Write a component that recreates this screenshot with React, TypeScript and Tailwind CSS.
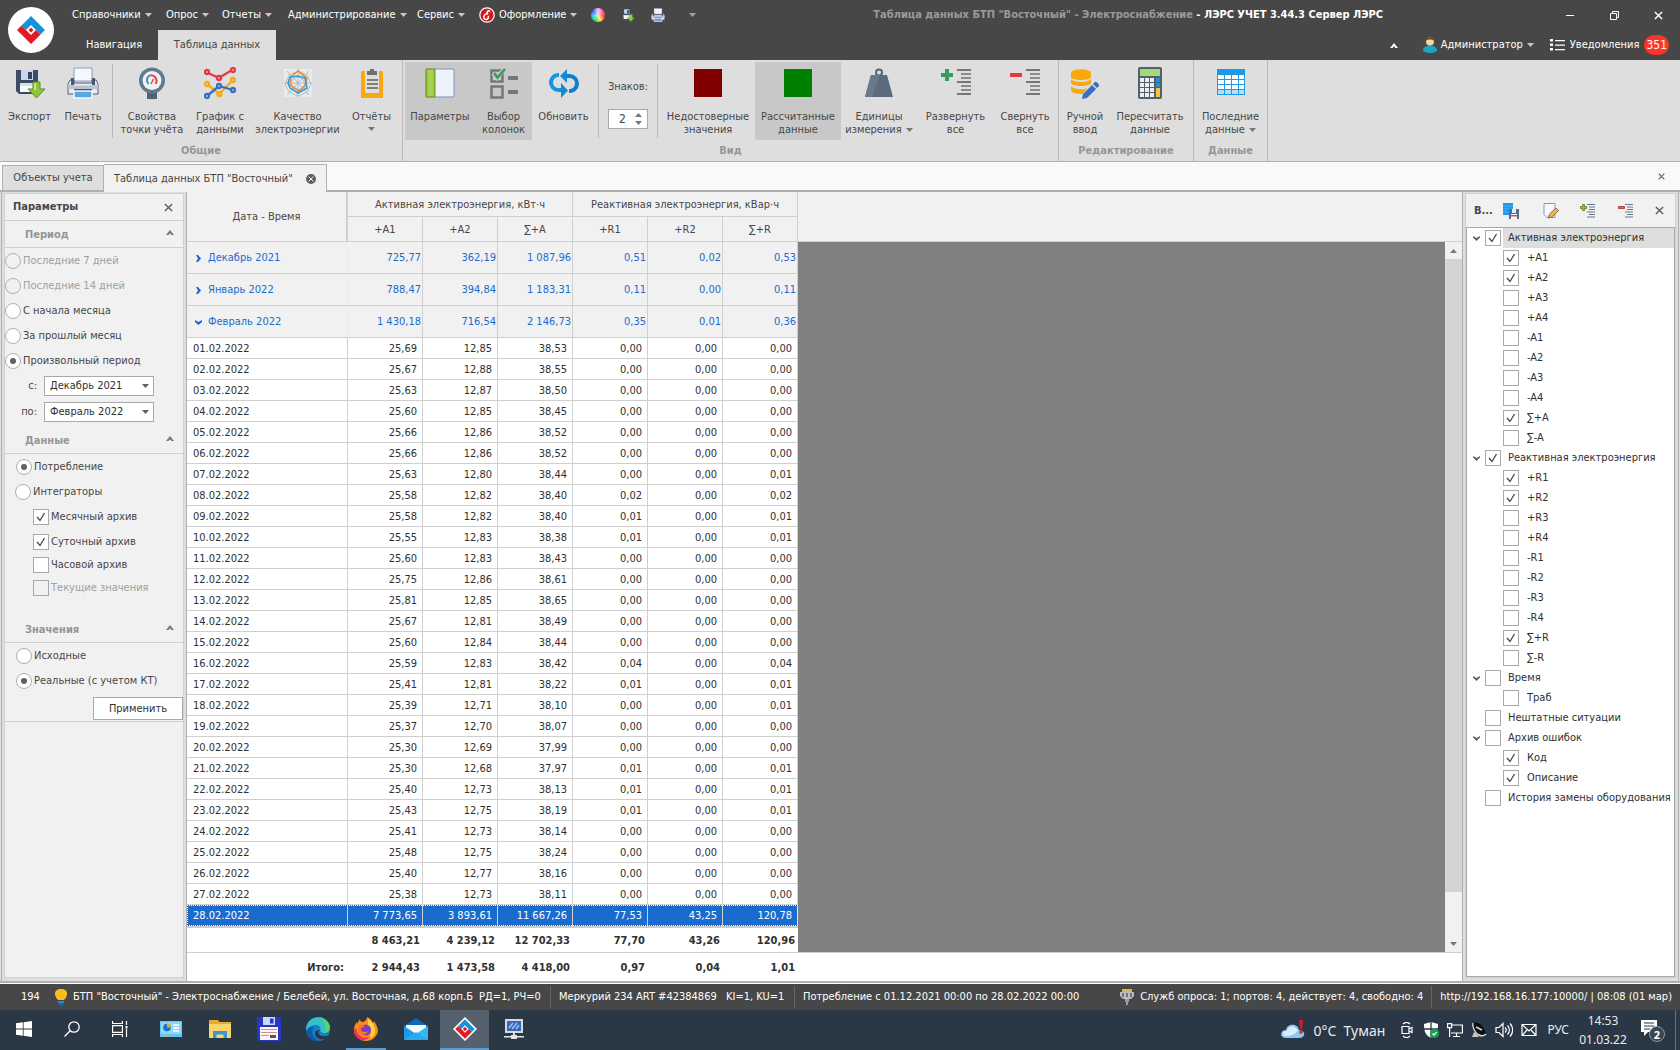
import type { ReactNode } from "react";

const FONT = "font-['DejaVu_Sans_Condensed','Noto_Sans',sans-serif]";

/* ---------- small shared glyphs ---------- */

const Caret = ({ className = "" }: { className?: string }) => (
  <svg viewBox="0 0 7 4" className={`h-1 w-[7px] shrink-0 ${className}`} aria-hidden="true">
    <path d="M0 0h7L3.5 4z" fill="currentColor" />
  </svg>
);

const Cross = ({ className = "size-2.5" }: { className?: string }) => (
  <svg viewBox="0 0 10 10" className={className} aria-hidden="true">
    <path d="M1 1l8 8M9 1l-8 8" stroke="currentColor" strokeWidth="1.6" fill="none" />
  </svg>
);

const ChevronUp = () => (
  <svg viewBox="0 0 8 5" className="h-[5px] w-2" aria-hidden="true">
    <path d="M0 5L4 0l4 5H5.500L4 3.200 2.500 5z" fill="currentColor" />
  </svg>
);

const LersMark = ({ className = "" }: { className?: string }) => (
  <svg viewBox="0 0 28 28" className={className} aria-hidden="true">
    <path d="M14 0l14 14-4.500 4.500L14 9l-5 5-4.500-4.500z" fill="#1492dc" />
    <path d="M14 28L0 14l4.500-4.500L14 19l5-5 4.500 4.500z" fill="#e01b24" />
    <path d="M14 11.500l2.500 2.500-2.500 2.500-2.500-2.500z" fill="#e01b24" />
  </svg>
);

/* ---------- ribbon icons ---------- */

const DiskIcon = ({ className = "size-8" }: { className?: string }) => (
  <svg viewBox="0 0 32 32" className={className} aria-hidden="true">
    <path d="M2 3h22v24H5l-3-3z" fill="#3d4a66" />
    <path d="M7 3h12v10H7z" fill="#c9d6ea" />
    <path d="M14 5h4v7h-4z" fill="#37435e" />
    <path d="M6 16h14v9H6z" fill="#fbfcfe" />
    <path d="M6 16h14v3H6z" fill="#d6deec" />
    <path d="M19 15h7v7h5l-8.500 9L14 22h5z" fill="#8cc63a" stroke="#5d8f1e" />
    <path d="M20 16h2v7h-2z" fill="#c5e68b" />
  </svg>
);

const PrinterIcon = ({ className = "size-8" }: { className?: string }) => (
  <svg viewBox="0 0 32 32" className={className} aria-hidden="true">
    <path d="M7 1h18v13H7z" fill="#f4f7fc" stroke="#8d9bc0" />
    <path d="M3 13h4v3h18v-3h4l2 4v10H1V17z" fill="#e8ebf2" stroke="#4c587a" />
    <path d="M1 17c3 2 27 2 30 0v5H1z" fill="#bac2d4" />
    <path d="M4 11h3v7H4zM25 11h3v7h-3z" fill="#4a5673" />
    <path d="M7 22h18v3H7z" fill="#44506e" />
    <path d="M7 24h18v7H7z" fill="#5aa7e6" stroke="#f5f8fd" strokeWidth="1.500" />
  </svg>
);

const MeterIcon = () => (
  <svg viewBox="0 0 32 32" className="size-8" aria-hidden="true">
    <path d="M11 24h10v8H11z" fill="#4d6273" />
    <circle cx="16" cy="13.500" r="13" fill="#5f7b8c" />
    <circle cx="16" cy="13.500" r="9.500" fill="#eef2f5" />
    <path d="M12.500 17a5.500 5.500 0 0 1 1-8.500" stroke="#3f8fd6" strokeWidth="2" fill="none" />
    <path d="M13.500 8.500a5.500 5.500 0 0 1 6 8.500" stroke="#e8483e" strokeWidth="2" fill="none" />
    <path d="M15 17l2.500-5" stroke="#e8483e" strokeWidth="1.500" />
  </svg>
);

const ChartIcon = () => (
  <svg viewBox="0 0 32 32" className="size-8" fill="none" strokeWidth="2.300" aria-hidden="true">
    <g stroke="#e63946"><path d="M4 6l11 5 13-8" /><g fill="#dedede"><circle cx="3" cy="5" r="2" /><circle cx="15" cy="11" r="2" /><circle cx="29" cy="3" r="2" /></g></g>
    <g stroke="#fba80f"><path d="M3 17l12 10L29 13" /><g fill="#dedede"><circle cx="3" cy="17" r="2" /><circle cx="15.500" cy="27" r="2" /><circle cx="29" cy="13" r="2" /></g></g>
    <g stroke="#3570c4"><path d="M3 29l12-10 14 4" /><g fill="#dedede"><circle cx="3" cy="29" r="2" /><circle cx="15" cy="19" r="2" /><circle cx="29" cy="23" r="2" /></g></g>
  </svg>
);

const RadarIcon = () => (
  <svg viewBox="0 0 32 32" className="size-8" fill="none" aria-hidden="true">
    <path d="M2 2h28v28H2z" fill="#e6ebef" />
    <g stroke="#b4bcc2"><path d="M16 2v28M2 16h28M5 4l22 24M27 4L5 28" /><path d="M16 4l9 4 4 9-4 8-9 4-9-4-4-8 4-9zM16 10l5 2 2 5-3 4-4 2-5-2-2-5 2-4z" /></g>
    <path d="M16 4l9 7-2 8-6 5-9-6 1-8z" stroke="#f58b2a" strokeWidth="1.600" />
    <path d="M8 10l8-1 7 2 2 10-9 5-8-5-2-5z" stroke="#2c9fe0" strokeWidth="1.600" />
  </svg>
);

const ReportIcon = () => (
  <svg viewBox="0 0 32 32" className="size-8" aria-hidden="true">
    <path d="M5 4h4v22h14V4h4v27H5z" fill="#fba80f" />
    <path d="M12 4h2V2h4v2h3v4H11V4z" fill="#6f6f6f" />
    <path d="M11 12h11v2H11zM11 16h11v2H11zM11 20h11v2H11z" fill="#7e7e7e" />
  </svg>
);

const ParamsIcon = () => (
  <svg viewBox="0 0 32 32" className="size-8" aria-hidden="true">
    <rect x="2" y="2" width="28" height="28" rx="1" fill="#eef2fb" stroke="#7e8fc4" />
    <path d="M2 2h9v28H2z" fill="#97c23f" stroke="#6f9a24" />
    <path d="M4 3h5v26H4z" fill="#a9d155" />
  </svg>
);

const ColumnsIcon = () => (
  <svg viewBox="0 0 32 32" className="size-8" fill="none" aria-hidden="true">
    <path d="M3.500 3.500h11v11h-11zM3.500 19.500h11v11h-11z" stroke="#767676" strokeWidth="2.500" />
    <path d="M20 9h10v4H20zM20 23h10v4H20z" fill="#767676" />
    <path d="M5 6l4 5 8-10" stroke="#c8c8c8" strokeWidth="4" />
    <path d="M6 6l3.500 4.500L17 2" stroke="#2f9e5c" strokeWidth="2.500" />
  </svg>
);

const RefreshIcon = () => (
  <svg viewBox="0 0 32 32" className="size-8" fill="none" aria-hidden="true">
    <path d="M11 8a7.500 7.500 0 0 0-1 15h4" stroke="#1793e0" strokeWidth="4" />
    <path d="M21 24a7.500 7.500 0 0 0 1-15h-4" stroke="#0f7fd0" strokeWidth="4" />
    <path d="M19 2v14l-7-7zM13 31V16l7 7.500z" fill="#1389d8" />
  </svg>
);

const Swatch = ({ className }: { className: string }) => (
  <span className="flex size-8 items-center justify-center"><span className={`size-7 ${className}`} /></span>
);

const WeightIcon = () => (
  <svg viewBox="0 0 32 32" className="size-8" aria-hidden="true">
    <circle cx="16" cy="5.500" r="3" fill="none" stroke="#556575" strokeWidth="2" />
    <path d="M8 8h16l6 22H2z" fill="#5b6b7b" />
    <path d="M8 8h9L9 30H2z" fill="#6a7a89" />
  </svg>
);

const TreeLines = ({ plus }: { plus: boolean }) => (
  <svg viewBox="0 0 32 32" className="size-8" aria-hidden="true">
    {plus ? <path d="M5 2h4v4h4v4H9v4H5v-4H1V6h4z" fill="#3a9a5f" /> : <path d="M1 6h12v4H1z" fill="#e63946" />}
    <path d="M17 2h14v2H17zM17 14h14v2H17zM17 26h14v2H17z" fill="#767676" />
    <path d="M21 6h10v2H21zM21 10h10v2H21zM21 18h10v2H21zM21 22h10v2H21z" fill="#8c8c8c" />
  </svg>
);

const DatabaseIcon = () => (
  <svg viewBox="0 0 32 32" className="size-8" aria-hidden="true">
    <path d="M2 6c0-5 20-5 20 0v4c0 4-20 4-20 0z" fill="#fba80f" />
    <path d="M2 12c3 4 17 4 20 0v4c0 4-20 4-20 0zM2 19c3 4 13 4 16 2l-4 6c-6 0-12-1-12-4z" fill="#fba80f" />
    <path d="M14 27l9-9 4 4-9 9-5 1zM24 17l2-2c1-1 5 3 4 4l-2 2z" fill="#3570c4" />
  </svg>
);

const CalcIcon = () => (
  <svg viewBox="0 0 32 32" className="size-8" aria-hidden="true">
    <rect x="4" y="0" width="24" height="32" rx="2" fill="#54606b" />
    <path d="M6 2h20v7H6z" fill="#a3d977" />
    <path d="M6 11h4v4H6zM11 11h4v4h-4zM16 11h4v4h-4zM6 16h4v4H6zM11 16h4v4h-4zM16 16h4v4h-4zM6 21h4v4H6zM11 21h4v4h-4zM16 21h4v4h-4zM6 26h4v4H6zM11 26h4v4h-4zM16 26h4v4h-4z" fill="#eceff2" />
    <path d="M22 11h4v4h-4zM22 16h4v4h-4z" fill="#1793e0" />
    <path d="M22 21h4v9h-4z" fill="#fcc32c" />
  </svg>
);

const TableIcon = () => (
  <svg viewBox="0 0 32 32" className="size-8" aria-hidden="true">
    <path d="M2 2h28v26H2z" fill="#1a9aea" />
    <path d="M3 8h6v4H3zM10 8h6v4h-6zM17 8h6v4h-6zM24 8h5v4h-5zM3 13h6v4H3zM10 13h6v4h-6zM17 13h6v4h-6zM24 13h5v4h-5zM3 18h6v4H3zM10 18h6v4h-6zM17 18h6v4h-6zM24 18h5v4h-5z" fill="#fff" />
    <path d="M3 23h6v4H3zM10 23h6v4h-6zM17 23h6v4h-6zM24 23h5v4h-5z" fill="#b5dff8" />
  </svg>
);

/* ---------- title bar ---------- */

const MENUS: [string, string][] = [
  ["Справочники", "w-[94px]"],
  ["Опрос", "w-14"],
  ["Отчеты", "w-[66px]"],
  ["Администрирование", "w-[129px]"],
  ["Сервис", "w-[62px]"],
];

const TitleBar = () => (
  <header className="flex h-[60px] shrink-0 bg-[#474747] text-white">
    <button aria-label="Меню приложения" className="my-auto ml-2 flex size-[46px] shrink-0 items-center justify-center rounded-full bg-white">
      <LersMark className="size-7" />
    </button>
    <div className="ml-[18px] flex min-w-0 flex-1 flex-col">
      <div className="flex h-[30px] items-center">
        {MENUS.map(([m, w]) => (
          <button key={m} className={`flex shrink-0 items-center gap-1 whitespace-nowrap ${w}`}>
            {m}
            <Caret className="text-[#c8c8c8]" />
          </button>
        ))}
        <button className="flex shrink-0 items-center gap-1 whitespace-nowrap">
          <svg viewBox="0 0 16 16" className="size-4" aria-hidden="true">
            <circle cx="8" cy="8" r="7.200" fill="#d3191f" stroke="#fff" strokeWidth="1.200" />
            <path d="M11 4.500c-2-2-4 1-2 2.500-4-1-6 5-2 5.500 2 0 3-2 2-3.500" fill="none" stroke="#fff" strokeWidth="1.500" />
          </svg>
          Оформление
          <Caret className="text-[#c8c8c8]" />
        </button>
        <button aria-label="Цвет" className="ml-3.5 size-3.5 shrink-0 rounded-full bg-[radial-gradient(circle,#ffffffcc,#ffffff00_60%),conic-gradient(#ffb0ff,#ff5b8a,#ff4020,#ffe040,#30e050,#20d0e0,#4060ff,#ffb0ff)]" />
        <button aria-label="Экспорт" className="ml-4"><DiskIcon className="size-3.5" /></button>
        <button aria-label="Печать" className="ml-4"><PrinterIcon className="size-3.5" /></button>
        <button aria-label="Настройка панели" className="ml-6"><Caret className="text-[#a0a0a0]" /></button>
        <h1 className="ml-auto font-bold whitespace-nowrap">
          <span className="text-[#9b9b9b]">Таблица данных БТП "Восточный" - Электроснабжение</span> - ЛЭРС УЧЕТ 3.44.3 Сервер ЛЭРС
        </h1>
        <div className="ml-[165px] flex w-[132px] shrink-0">
          <button aria-label="Свернуть" className="flex h-[30px] w-11 items-center justify-center"><span className="h-px w-2 bg-white" /></button>
          <button aria-label="Восстановить" className="flex h-[30px] w-11 items-center justify-center">
            <svg viewBox="0 0 9 9" className="size-[9px]" fill="none" stroke="#fff" aria-hidden="true"><path d="M.5 2.500h6v6h-6zM2.500 2.500v-2h6v6h-2" /></svg>
          </button>
          <button aria-label="Закрыть" className="flex h-[30px] w-11 items-center justify-center"><Cross className="size-[9px]" /></button>
        </div>
      </div>
      <div className="flex h-[30px] items-center">
        <button className="ml-3.5 w-[72px] text-left">Навигация</button>
        <button className="h-[30px] w-[118px] bg-[#dedede] text-[#474747]">Таблица данных</button>
        <button aria-label="Свернуть ленту" className="mr-[25px] ml-auto"><ChevronUp /></button>
        <button className="mr-4 flex items-center gap-1">
          <svg viewBox="0 0 14 16" className="h-4 w-3.5" aria-hidden="true">
            <path d="M0 13c0-6 14-6 14 0 0 4-14 4-14 0z" fill="#1fa2c4" />
            <circle cx="7" cy="4.500" r="4" fill="#fcd3a0" />
            <path d="M3 4c0-5 8-5 8 0-2-2-6-2-8 0z" fill="#6b4a2c" />
          </svg>
          Администратор
          <Caret className="text-[#c8c8c8]" />
        </button>
        <button className="mr-[11px] flex items-center gap-[5px]">
          <svg viewBox="0 0 15 12" className="h-3 w-[15px]" fill="#fff" aria-hidden="true"><path d="M0 0h3v2.500H0zM0 4.500h3V7H0zM0 9h3v2.500H0zM5 1h10v1.300H5zM5 5.500h10v1.300H5zM5 10h10v1.300H5z" /></svg>
          Уведомления
          <span className="rounded-full bg-[#ff3328] px-0.5 py-[3px] text-[12px] leading-[14px]">351</span>
        </button>
      </div>
    </div>
  </header>
);

/* ---------- ribbon ---------- */

type RibbonButtonProps = { icon: ReactNode; lines: string[]; width: string; active?: boolean; drop?: "below" | "inline" };

const RibbonButton = ({ icon, lines, width, active, drop }: RibbonButtonProps) => (
  <button className={`flex h-[78px] shrink-0 flex-col items-center pt-[5px] ${width} ${active ? "bg-[#c8c8c8]" : ""}`}>
    {icon}
    <span className="mt-[11px] flex flex-col items-center leading-[13px] whitespace-nowrap">
      {lines.map((l, i) => (
        <span key={l} className="flex items-center gap-1">
          {l}
          {drop === "inline" && i === lines.length - 1 && <Caret className="text-[#767676]" />}
        </span>
      ))}
      {drop === "below" && <Caret className="mt-1 text-[#767676]" />}
    </span>
  </button>
);

const RibbonGroup = ({ title, children }: { title: string; children: ReactNode }) => (
  <section className="flex flex-col border-r border-[#b9b9b9] px-0.5 pt-0.5">
    <div className="flex h-[78px]">{children}</div>
    <h2 className="flex flex-1 items-center justify-center pt-px font-bold text-[#969696]">{title}</h2>
  </section>
);

const RibbonRule = () => <span className="mx-[3px] my-0.5 w-px shrink-0 bg-[#b9b9b9]" />;

const Ribbon = () => (
  <nav className="flex h-[102px] shrink-0 border-b border-[#b0b0b0] bg-[#dedede] text-[#474747]">
    <RibbonGroup title="Общие">
      <RibbonButton icon={<DiskIcon />} lines={["Экспорт"]} width="w-[55px]" />
      <RibbonButton icon={<PrinterIcon />} lines={["Печать"]} width="w-[52px]" />
      <RibbonRule />
      <RibbonButton icon={<MeterIcon />} lines={["Свойства", "точки учёта"]} width="w-[72px]" />
      <RibbonButton icon={<ChartIcon />} lines={["График с", "данными"]} width="w-[64px]" />
      <RibbonButton icon={<RadarIcon />} lines={["Качество", "электроэнергии"]} width="w-[91px]" />
      <RibbonButton icon={<ReportIcon />} lines={["Отчёты"]} width="w-[57px]" drop="below" />
    </RibbonGroup>
    <RibbonGroup title="Вид">
      <RibbonButton icon={<ParamsIcon />} lines={["Параметры"]} width="w-[70px]" active />
      <RibbonButton icon={<ColumnsIcon />} lines={["Выбор", "колонок"]} width="w-[57px]" active />
      <RibbonButton icon={<RefreshIcon />} lines={["Обновить"]} width="w-[63px]" />
      <RibbonRule />
      <div className="flex w-[52px] flex-col items-center pt-[17px]">
        <label htmlFor="digits" className="leading-4">Знаков:</label>
        <div className="mt-3.5 flex h-5 w-10 items-center border border-[#a9a9a9] bg-white pr-[5px]">
          <input id="digits" defaultValue="2" className="w-0 min-w-0 flex-1 pl-2.5 text-[12px] outline-none" />
          <span className="flex flex-col gap-1 text-[#767676]"><Caret className="w-[5px] rotate-180" /><Caret className="w-[5px]" /></span>
        </div>
      </div>
      <RibbonRule />
      <RibbonButton icon={<Swatch className="bg-[#800000]" />} lines={["Недостоверные", "значения"]} width="w-[94px]" />
      <RibbonButton icon={<Swatch className="bg-[#008000]" />} lines={["Рассчитанные", "данные"]} width="w-[86px]" active />
      <RibbonButton icon={<WeightIcon />} lines={["Единицы", "измерения"]} width="w-[76px]" drop="inline" />
      <RibbonButton icon={<TreeLines plus />} lines={["Развернуть", "все"]} width="w-[77px]" />
      <RibbonButton icon={<TreeLines plus={false} />} lines={["Свернуть", "все"]} width="w-[62px]" />
    </RibbonGroup>
    <RibbonGroup title="Редактирование">
      <RibbonButton icon={<DatabaseIcon />} lines={["Ручной", "ввод"]} width="w-[48px]" />
      <RibbonButton icon={<CalcIcon />} lines={["Пересчитать", "данные"]} width="w-[82px]" />
    </RibbonGroup>
    <RibbonGroup title="Данные">
      <RibbonButton icon={<TableIcon />} lines={["Последние", "данные"]} width="w-[69px]" drop="inline" />
    </RibbonGroup>
  </nav>
);

/* ---------- document tabs ---------- */

const DocumentTabs = () => (
  <div className="flex h-[30px] shrink-0 items-end border-b-2 border-[#b0b0b0] bg-[#f9f9fb] pl-0.5 text-[#474747]">
    <button className="h-[25px] w-[102px] border border-b-0 border-[#b0b0b0] bg-[#dedede]">Объекты учета</button>
    <div className="-mb-0.5 flex h-[28px] w-[223px] items-center border border-b-0 border-l-0 border-[#b0b0b0] bg-[#f1f1f1] pl-2.5">
      <button className="w-[178px] text-left whitespace-nowrap">Таблица данных БТП "Восточный"</button>
      <button aria-label="Закрыть вкладку" className="ml-3.5 flex size-2.5 items-center justify-center rounded-full bg-[#606060] text-white"><Cross className="size-1.5" /></button>
    </div>
    <button aria-label="Закрыть документ" className="mr-[15px] mb-2.5 ml-auto text-[#606060]"><Cross className="size-[7px]" /></button>
  </div>
);

/* ---------- form controls ---------- */

const Radio = ({ name, label, checked, disabled, className = "" }: { name: string; label: string; checked?: boolean; disabled?: boolean; className?: string }) => (
  <label className={`flex h-[25px] items-center gap-0.5 whitespace-nowrap ${disabled ? "text-[#a0a0a0]" : ""} ${className}`}>
    <span className="relative flex size-4 shrink-0">
      <input type="radio" name={name} defaultChecked={checked} disabled={disabled} className="peer size-4 appearance-none rounded-full border border-[#b0b0b0] bg-white disabled:bg-[#f1f1f1]" />
      <span className="pointer-events-none absolute inset-[5px] hidden rounded-full bg-[#606060] peer-checked:block" />
    </span>
    {label}
  </label>
);

const CheckInput = ({ label, checked, disabled }: { label: string; checked?: boolean; disabled?: boolean }) => (
  <span className="relative flex size-4 shrink-0">
    <input type="checkbox" aria-label={label} defaultChecked={checked} disabled={disabled} className="peer size-4 appearance-none border border-[#a9a9a9] bg-white disabled:bg-[#f1f1f1]" />
    <svg viewBox="0 0 16 16" className="pointer-events-none absolute inset-0 hidden size-4 peer-checked:block" aria-hidden="true">
      <path d="M4 8l3 3.500L11.500 4" stroke="#474747" strokeWidth="1.300" fill="none" />
    </svg>
  </span>
);

const Check = (p: { label: string; checked?: boolean; disabled?: boolean; className?: string }) => (
  <label className={`ml-7 flex items-center gap-0.5 whitespace-nowrap ${p.disabled ? "text-[#a0a0a0]" : ""} ${p.className ?? ""}`}>
    <CheckInput label={p.label} checked={p.checked} disabled={p.disabled} />
    {p.label}
  </label>
);

const PeriodSelect = ({ id, label, value }: { id: string; label: string; value: string }) => (
  <div className="flex h-[26px] items-center">
    <label htmlFor={id} className="w-8 text-right">{label}</label>
    <div className="relative ml-[7px] flex w-[110px]">
      <select id={id} className="h-5 w-full appearance-none border border-[#a9a9a9] bg-white pl-[5px] text-[#303030]"><option>{value}</option></select>
      <Caret className="pointer-events-none absolute top-2 right-[5px] text-[#606060]" />
    </div>
  </div>
);

const SectionHeader = ({ title, className = "" }: { title: string; className?: string }) => (
  <div className={`flex h-[27px] items-center border-b border-[#cfcfcf] pt-px pr-[9px] pl-5 font-bold text-[#969696] ${className}`}>
    <h3>{title}</h3>
    <button aria-label={`Свернуть: ${title}`} className="mb-1 ml-auto text-[#767676]"><ChevronUp /></button>
  </div>
);

const ParamsPanel = () => (
  <aside className="flex w-[185px] shrink-0 border-l border-[#b0b0b0] bg-[#dedede] pt-px pr-0.5 pb-[3px] pl-0.5">
    <form className="flex min-w-0 flex-1 flex-col border border-[#d0d0d0] bg-[#f1f1f1] text-[#474747]">
      <div className="flex h-[27px] items-center border-b border-[#cfcfcf] pr-2.5 pl-2 font-bold">
        <h2>Параметры</h2>
        <button type="button" aria-label="Закрыть параметры" className="ml-auto text-[#606060]"><Cross className="size-[9px]" /></button>
      </div>
      <SectionHeader title="Период" />
      <Radio name="period" label="Последние 7 дней" disabled />
      <Radio name="period" label="Последние 14 дней" disabled />
      <Radio name="period" label="С начала месяца" />
      <Radio name="period" label="За прошлый месяц" />
      <Radio name="period" label="Произвольный период" checked />
      <PeriodSelect id="from" label="с:" value="Декабрь 2021" />
      <PeriodSelect id="to" label="по:" value="Февраль 2022" />
      <SectionHeader title="Данные" className="mt-0.5" />
      <Radio name="data" label="Потребление" checked className="ml-[11px]" />
      <Radio name="data" label="Интеграторы" className="ml-2.5" />
      <Check label="Месячный архив" checked className="h-[25px]" />
      <Check label="Суточный архив" checked className="h-[25px]" />
      <Check label="Часовой архив" className="h-[22px]" />
      <Check label="Текущие значения" disabled className="h-[24px]" />
      <SectionHeader title="Значения" className="mt-4" />
      <Radio name="values" label="Исходные" className="ml-[11px]" />
      <Radio name="values" label="Реальные (с учетом КТ)" checked className="ml-[11px]" />
      <div className="flex justify-end border-b border-[#cfcfcf] pt-1 pb-px">
        <button type="button" className="h-[23px] w-[90px] border border-[#a9a9a9] bg-white text-[#303030]">Применить</button>
      </div>
    </form>
  </aside>
);

/* ---------- data table ---------- */

const MONTHS: [string, boolean, string[]][] = [
  ["Декабрь 2021", false, ["725,77", "362,19", "1 087,96", "0,51", "0,02", "0,53"]],
  ["Январь 2022", false, ["788,47", "394,84", "1 183,31", "0,11", "0,00", "0,11"]],
  ["Февраль 2022", true, ["1 430,18", "716,54", "2 146,73", "0,35", "0,01", "0,36"]],
];

const DAYS = [
  "25,69 12,85 38,53 0,00 0,00 0,00",
  "25,67 12,88 38,55 0,00 0,00 0,00",
  "25,63 12,87 38,50 0,00 0,00 0,00",
  "25,60 12,85 38,45 0,00 0,00 0,00",
  "25,66 12,86 38,52 0,00 0,00 0,00",
  "25,66 12,86 38,52 0,00 0,00 0,00",
  "25,63 12,80 38,44 0,00 0,00 0,01",
  "25,58 12,82 38,40 0,02 0,00 0,02",
  "25,58 12,82 38,40 0,01 0,00 0,01",
  "25,55 12,83 38,38 0,01 0,00 0,01",
  "25,60 12,83 38,43 0,00 0,00 0,00",
  "25,75 12,86 38,61 0,00 0,00 0,00",
  "25,81 12,85 38,65 0,00 0,00 0,00",
  "25,67 12,81 38,49 0,00 0,00 0,00",
  "25,60 12,84 38,44 0,00 0,00 0,00",
  "25,59 12,83 38,42 0,04 0,00 0,04",
  "25,41 12,81 38,22 0,01 0,00 0,01",
  "25,39 12,71 38,10 0,00 0,00 0,01",
  "25,37 12,70 38,07 0,00 0,00 0,00",
  "25,30 12,69 37,99 0,00 0,00 0,00",
  "25,30 12,68 37,97 0,01 0,00 0,01",
  "25,40 12,73 38,13 0,01 0,00 0,01",
  "25,43 12,75 38,19 0,01 0,00 0,01",
  "25,41 12,73 38,14 0,00 0,00 0,00",
  "25,48 12,75 38,24 0,00 0,00 0,00",
  "25,40 12,77 38,16 0,00 0,00 0,00",
  "25,38 12,73 38,11 0,00 0,00 0,00",
];

const SELECTED = ["7 773,65", "3 893,61", "11 667,26", "77,53", "43,25", "120,78"];
const SUM = ["8 463,21", "4 239,12", "12 702,33", "77,70", "43,26", "120,96"];
const TOTAL = ["2 944,43", "1 473,58", "4 418,00", "0,97", "0,04", "1,01"];

const DataTable = () => (
  <table className="w-[611px] shrink-0 table-fixed border-separate border-spacing-0 bg-white leading-[14px] whitespace-nowrap text-[#303030] [&_td]:pt-px [&_th]:pt-px">
    <colgroup>
      <col className="w-[161px]" />
      {SUM.map((s) => <col key={s} className="w-[75px]" />)}
    </colgroup>
    <thead className="bg-[#f1f1f1] text-[#474747] [&_th]:border-r [&_th]:border-b [&_th]:border-[#cfcfcf] [&_th]:font-normal">
      <tr className="h-[25px]">
        <th rowSpan={2} className="border-r-2!">Дата - Время</th>
        <th colSpan={3}>Активная электроэнергия, кВт·ч</th>
        <th colSpan={3}>Реактивная электроэнергия, кВар·ч</th>
      </tr>
      <tr className="h-[25px]">
        {["+A1", "+A2", "∑+A", "+R1", "+R2", "∑+R"].map((c) => <th key={c}>{c}</th>)}
      </tr>
    </thead>
    <tbody>
      {MONTHS.map(([name, open, vals]) => (
        <tr key={name} className="h-8 bg-[#f1f1f1] text-[#1a6bd0]">
          <td className="border-r border-b border-[#cfcfcf] border-r-[#ebebeb] pl-2">
            <button className="flex items-center gap-1.5">
              <svg viewBox="0 0 7 7" className={`size-[7px] ${open ? "rotate-90" : ""}`} aria-hidden="true"><path d="M1 0h2l3 3.500L3 7H1l2-3.500z" fill="currentColor" /></svg>
              {name}
            </button>
          </td>
          {vals.map((v, i) => <td key={i} className="border-r border-b border-[#cfcfcf] pr-px text-right">{v}</td>)}
        </tr>
      ))}
      {DAYS.map((row, n) => (
        <tr key={n} className="h-[21px] [&>td]:border-r [&>td]:border-b [&>td]:border-[#cfcfcf]">
          <td className="pl-1.5">{`${String(n + 1).padStart(2, "0")}.02.2022`}</td>
          {row.split(" ").map((v, i) => <td key={i} className="pr-[5px] text-right">{v}</td>)}
        </tr>
      ))}
      <tr className="h-[21px] bg-[#1a6bd0] text-white outline outline-1 -outline-offset-1 outline-dotted outline-white [&>td]:border-r [&>td]:border-[#cfcfcf]">
        <td className="pl-1.5">28.02.2022</td>
        {SELECTED.map((v) => <td key={v} className="pr-[5px] text-right">{v}</td>)}
      </tr>
    </tbody>
    <tfoot className="font-bold [&_td]:border-[#cfcfcf]">
      <tr className="h-[27px]">
        <td className="border-t-2 border-b" />
        {SUM.map((v) => <td key={v} className="border-t-2 border-b pr-[3px] text-right">{v}</td>)}
      </tr>
      <tr className="h-7">
        <td className="pr-1 text-right">Итого:</td>
        {TOTAL.map((v) => <td key={v} className="pr-[3px] text-right">{v}</td>)}
      </tr>
    </tfoot>
  </table>
);

const TableArea = () => (
  <main className="flex min-w-0 flex-1 items-start border-l border-[#b0b0b0] bg-white">
    <DataTable />
    <div className="flex flex-1 flex-col self-stretch">
      <div className="h-[50px] shrink-0 border-b border-[#cfcfcf] bg-[#f1f1f1]" />
      <div className="flex flex-1">
        <div className="flex-1 bg-[#808080]" />
        <div className="flex w-[17px] flex-col bg-[#f1f1f1] text-[#767676]">
          <button aria-label="Вверх" className="flex h-[17px] items-center justify-center"><Caret className="rotate-180" /></button>
          <div className="flex-1 bg-[#d4d4d4]" />
          <div className="h-[43px]" />
          <button aria-label="Вниз" className="flex h-[17px] items-center justify-center"><Caret /></button>
        </div>
      </div>
      <div className="h-[29px] shrink-0 border-t border-[#cfcfcf]" />
    </div>
  </main>
);

/* ---------- column chooser ---------- */

type Node = { label: string; on?: boolean; children?: [string, boolean][] };

const TREE: Node[] = [
  { label: "Активная электроэнергия", on: true, children: [["+A1", true], ["+A2", true], ["+A3", false], ["+A4", false], ["-A1", false], ["-A2", false], ["-A3", false], ["-A4", false], ["∑+A", true], ["∑-A", false]] },
  { label: "Реактивная электроэнергия", on: true, children: [["+R1", true], ["+R2", true], ["+R3", false], ["+R4", false], ["-R1", false], ["-R2", false], ["-R3", false], ["-R4", false], ["∑+R", true], ["∑-R", false]] },
  { label: "Время", children: [["Tраб", false]] },
  { label: "Нештатные ситуации" },
  { label: "Архив ошибок", children: [["Код", true], ["Описание", true]] },
  { label: "История замены оборудования" },
];

const SmallTree = ({ plus }: { plus: boolean }) => (
  <svg viewBox="0 0 15 14" className="h-3.5 w-[15px]" aria-hidden="true">
    {plus ? <path d="M2.500.5h2v2h2v2h-2v2h-2v-2h-2v-2h2z" fill="#8cc63a" stroke="#4f7d18" strokeWidth=".8" /> : <path d="M.5 2.500h6v2h-6z" fill="#e8564e" stroke="#b02a24" strokeWidth=".8" />}
    <path d="M7 .5h8M9 3h6M9 5.500h6M7 8h8M9 10.500h6M7 13h8" stroke="#66748c" />
  </svg>
);

const ColumnsPanel = () => (
  <aside className="flex w-[217px] shrink-0 border-x border-[#b0b0b0] bg-[#dedede] pt-px pr-0.5 pb-[3px] pl-0.5">
    <div className="flex min-w-0 flex-1 flex-col border border-[#d0d0d0] bg-[#f1f1f1] text-[#474747]">
      <div className="flex h-[33px] items-center pl-2">
        <h2 className="w-7 font-bold">В...</h2>
        <button aria-label="Сохранить набор" className="ml-px">
          <svg viewBox="0 0 16 16" className="size-4" aria-hidden="true"><path d="M0 0h10v12H0z" fill="#1a9aea" /><path d="M0 3h10M0 6h10M0 9h10" stroke="#5fbcf5" strokeWidth=".6" /><path d="M6 6h10v10H6z" fill="#5b6a8c" /><path d="M9 6h4v4H9z" fill="#e6ebf4" /><path d="M8 11h6v5H8z" fill="#fff" /><path d="M8 12h6v1.500H8z" fill="#d64a42" /></svg>
        </button>
        <button aria-label="Изменить" className="ml-6">
          <svg viewBox="0 0 16 16" className="size-4" aria-hidden="true"><path d="M1 .5h11v14H4l-3-3z" fill="#f5f8fd" stroke="#8296c4" /><path d="M5 15l1.500-4L13 5l2.500 2.500L9 14z" fill="#f0b25a" stroke="#7c5a28" strokeWidth=".8" /></svg>
        </button>
        <button aria-label="Развернуть все" className="ml-[21px]"><SmallTree plus /></button>
        <button aria-label="Свернуть все" className="ml-[23px]"><SmallTree plus={false} /></button>
        <button aria-label="Закрыть выбор колонок" className="ml-auto mr-[11px] text-[#606060]"><Cross className="size-[9px]" /></button>
      </div>
      <ul className="flex-1 border border-[#a9a9a9] bg-white whitespace-nowrap text-[#303030]">
        {TREE.map((node, n) => (
          <li key={node.label}>
            <div className="flex h-5 items-center pl-1.5">
              {node.children ? (
                <button aria-label={`Свернуть: ${node.label}`} className="mr-[5px] text-[#606060]">
                  <svg viewBox="0 0 7 5" className="h-[5px] w-[7px]" aria-hidden="true"><path d="M0 0l3.500 2L7 0v1.500L3.500 5 0 1.500z" fill="currentColor" /></svg>
                </button>
              ) : <span className="w-3" />}
              <CheckInput label={node.label} checked={node.on} />
              <span className={`ml-0.5 flex h-5 flex-1 items-center pl-[5px] ${n === 0 ? "bg-[#dedede]" : ""}`}>{node.label}</span>
            </div>
            {node.children && (
              <ul>
                {node.children.map(([label, on]) => (
                  <li key={label} className="flex h-5 items-center gap-2 pl-9"><CheckInput label={label} checked={on} />{label}</li>
                ))}
              </ul>
            )}
          </li>
        ))}
      </ul>
    </div>
  </aside>
);

/* ---------- status bar ---------- */

const StatusRule = () => <span className="my-0.5 w-px shrink-0 self-stretch bg-[#666]" />;

const StatusBar = () => (
  <footer className="flex h-[26px] shrink-0 items-center bg-[#474747] whitespace-nowrap text-white">
    <span className="w-[55px] pl-[21px]">194</span>
    <svg viewBox="0 0 12 17" className="mr-1.5 h-[17px] w-3" aria-hidden="true"><path d="M6 0c8 0 7 7 3 11H3C-1 7-2 0 6 0z" fill="#fbbd1c" /><path d="M3 12h6v2H3z" fill="#188fd0" /><path d="M4 14h4v2.500H4z" fill="#0f6fae" /></svg>
    <span className="w-[406px]">БТП "Восточный" - Электроснабжение / Белебей, ул. Восточная, д.68 корп.Б</span>
    <span className="w-[71px]">РД=1, РЧ=0</span>
    <StatusRule />
    <span className="ml-2 w-[167px]">Меркурий 234 ART #42384869</span>
    <span className="w-[68px]">KI=1, KU=1</span>
    <StatusRule />
    <span className="ml-2">Потребление с 01.12.2021 00:00 по 28.02.2022 00:00</span>
    <svg viewBox="0 0 14 16" className="mr-1.5 ml-auto h-4 w-3.5" aria-hidden="true"><path d="M2 0h10v3H2z" fill="#e0b258" /><path d="M0 3h14v4l-3 3H3L0 7z" fill="#b9bcc0" /><path d="M2 4h2v4H2zM6 4h2v4H6zM10 4h2v4h-2z" fill="#70757b" /><path d="M5 10h4v3H8v3H6v-3H5z" fill="#9a9ea3" /></svg>
    <span className="mr-2">Служб опроса: 1; портов: 4, действует: 4, свободно: 4</span>
    <StatusRule />
    <span className="mr-2 ml-2">http://192.168.16.177:10000/ | 08:08 (01 мар)</span>
  </footer>
);

/* ---------- taskbar ---------- */

const TaskButton = ({ label, children, className = "w-12" }: { label: string; children: ReactNode; className?: string }) => (
  <button aria-label={label} className={`flex h-10 shrink-0 items-center justify-center border-b-2 ${className}`}>{children}</button>
);

const APP = "w-[49px] border-transparent";

const TaskBar = () => (
  <footer className="flex h-10 shrink-0 items-center bg-[#2a3745] font-['Noto_Sans',sans-serif] text-[#e8ecf0]">
    <TaskButton label="Пуск" className="w-12 border-transparent">
      <svg viewBox="0 0 16 16" className="size-4" fill="#fff" aria-hidden="true"><path d="M0 2.300l6.800-1v6.300H0zM7.600 1.200L16 0v7.600H7.600zM0 8.400h6.800v6.300l-6.800-1zM7.600 8.400H16V16l-8.400-1.200z" /></svg>
    </TaskButton>
    <TaskButton label="Поиск" className="w-12 border-transparent">
      <svg viewBox="0 0 16 16" className="size-4" fill="none" stroke="#fff" strokeWidth="1.300" aria-hidden="true"><circle cx="10" cy="6" r="5.200" /><path d="M6.200 9.700L.5 15.500" /></svg>
    </TaskButton>
    <TaskButton label="Представление задач" className="mr-0.5 w-12 border-transparent">
      <svg viewBox="0 0 16 16" className="size-4" fill="none" stroke="#fff" strokeWidth="1.200" aria-hidden="true"><path d="M.6 0v2.500h9.800V0M.6 4.600h9.800v6.800H.6zM.6 16v-2.500h9.800V16M14.500 0v4M14.500 8v8" /><path d="M13.500 5h2v2.500h-2z" fill="#fff" stroke="none" /></svg>
    </TaskButton>
    <TaskButton label="Панель управления" className={APP}>
      <svg viewBox="0 0 22 16" className="h-4 w-[22px]" aria-hidden="true"><path d="M0 0h22v16H0z" fill="#63c5f4" /><path d="M1 1h20v12H1z" fill="#8ed8fb" /><circle cx="7" cy="6.500" r="3.800" fill="#1275bf" /><path d="M7 6.500V2.700a3.800 3.800 0 0 1 3.800 3.800z" fill="#f3a72d" /><path d="M13 4h6M13 7h6M13 10h6" stroke="#fff" strokeWidth="1.500" /><path d="M3 14.500h8" stroke="#f3a72d" strokeWidth="1.500" /></svg>
    </TaskButton>
    <TaskButton label="Проводник" className={APP}>
      <svg viewBox="0 0 22 18" className="h-[18px] w-[22px]" aria-hidden="true"><path d="M0 0h9l1.500 2H22v16H0z" fill="#e8a92c" /><path d="M0 4h22v14H0z" fill="#fbd56a" /><path d="M4 18v-7h14v7h-3.500v-3.500h-7V18z" fill="#3a96dd" /></svg>
    </TaskButton>
    <TaskButton label="Диск" className={APP}>
      <svg viewBox="0 0 24 24" className="size-6" aria-hidden="true"><path d="M0 0h24v24H2l-2-2z" fill="#2438c8" /><path d="M6 0h12v8H6z" fill="#cfd6ee" /><path d="M13 1.500h3.500v5H13z" fill="#2438c8" /><path d="M3 10h18v13H3z" fill="#fbf5f5" /><path d="M4 12.500h16M4 15.500h16M4 18.500h8" stroke="#e08a8a" /><path d="M13 18h6v3h-6z" fill="#555" /></svg>
    </TaskButton>
    <TaskButton label="Браузер Edge" className={APP}>
      <svg viewBox="0 0 24 24" className="size-6" aria-hidden="true"><circle cx="12" cy="12" r="12" fill="#1182cf" /><path d="M1 8C4-1 17-3 22.500 6c3 6 0 10-4 10-3 0-5-1.500-4-3 1-3-2-5-5-5C5 8 1 11 0 14c0-2 0-4 1-6z" fill="#36c1c8" /><path d="M14 .2c7 1 12 9 9 13-1 2-3 2.800-5 2.800 3-4 2-12-4-15.800z" fill="#55d66a" /><path d="M8 10c-4 5-1 12 6 14-8 0-13-5-13.500-10C2 11 5 9 8 10z" fill="#0c59a4" /><path d="M14 13c-4 3 0 8 8 5.500-3 5-9 5-12 1-2-3-1-7 4-6.500z" fill="#2a3745" /></svg>
    </TaskButton>
    <TaskButton label="Браузер Firefox" className="mr-[5px] ml-1 w-10 border-[#5b9bd0]">
      <svg viewBox="0 0 24 24" className="size-6" aria-hidden="true"><path d="M13 0c5 2 5 5 6 6l1-2c3 4 4 8 4 10-1 6-6 10-12 10S0 19 0 13c0-3 1-6 3-8v2l3-5c0 2 1 3 2 3 2 0 5-2 5-5z" fill="#ff8a1e" /><path d="M14 2c5 3 8 8 7 14-2 5-7 7-11 7 7-2 10-9 4-15z" fill="#ffd53e" /><path d="M2 11c1 8 8 12 15 8-4 7-17 5-17-6z" fill="#f0325b" /><circle cx="11.500" cy="13" r="5.500" fill="#7a3bd0" /><path d="M5 8c2-1 5 0 6 2-2 0-4 0-4 2 0 3 4 4 7 2-2 6-10 4-10-1z" fill="#ff7426" /></svg>
    </TaskButton>
    <TaskButton label="Почта" className={APP}>
      <svg viewBox="0 0 24 22" className="h-[22px] w-6" aria-hidden="true"><path d="M0 8l12-8 12 8v14H0z" fill="#1068b8" /><path d="M2 7h20v9H2z" fill="#f5fafd" /><path d="M0 8l12 8L0 22z" fill="#199be6" /><path d="M24 8L12 16l12 6z" fill="#33b8f3" /><path d="M0 22l12-8 12 8z" fill="#2aa9ee" /></svg>
    </TaskButton>
    <TaskButton label="ЛЭРС УЧЕТ" className="w-[49px] border-[#5b9bd0] bg-[#55616c]">
      <svg viewBox="0 0 32 32" className="size-6" aria-hidden="true"><path d="M16 0l16 16-16 16L0 16z" fill="#fff" /><path d="M16 3l13 13-4 4-9-9-5 5-4-4z" fill="#1492dc" /><path d="M16 29L3 16l4-4 9 9 5-5 4 4zM16 13l3 3-3 3-3-3z" fill="#e01b24" /></svg>
    </TaskButton>
    <TaskButton label="Удаленный рабочий стол" className={APP}>
      <svg viewBox="0 0 20 20" className="size-5" aria-hidden="true"><path d="M1 0h18v14H1z" fill="#d6dade" /><path d="M3 2h14v10H3z" fill="#3566b8" /><path d="M5 9l4-5M8 10l5-6M12 10l3-4" stroke="#a5c4ef" strokeWidth="1.500" /><path d="M9 14h2v3H9zM0 17h20v1.500H0zM7 16h6v4H7z" fill="#e2e5e8" /></svg>
    </TaskButton>

    <div className="ml-auto flex h-10 items-center">
      <svg viewBox="0 0 24 20" className="h-5 w-6" aria-hidden="true"><path d="M5 18c-7 0-6-8 0-8 1-7 12-7 13 0 7 0 7 8 0 8z" fill="#8cc8f0" /><path d="M5 16c-5 0-4-6 1-5 1-6 9-6 11 0-4 4-8 5-12 5z" fill="#d9eefb" /><path d="M18 0h4l-1 9h-2zM18.500 10.500h3v3h-3z" fill="#e0162b" /></svg>
      <span className="ml-2 pt-0.5 text-[14px] whitespace-pre">0°C  Туман</span>
      <div className="ml-3.5 flex items-center gap-2">
        <svg viewBox="0 0 16 16" className="size-4" fill="none" stroke="#fff" strokeWidth="1.200" aria-hidden="true"><path d="M3 4.500h7v7H3zM10 7l3-1.500v5L10 9M4 2c2-2 5-2 7 0M4 14c2 2 5 2 7 0" /></svg>
        <svg viewBox="0 0 16 16" className="size-4" aria-hidden="true"><path d="M8 0l7 2c0 7-1 11-7 14C2 13 1 9 1 2z" fill="#fff" /><path d="M8 0v16M1 7h14" stroke="#2a3745" strokeWidth="1.300" /><circle cx="11.500" cy="11.500" r="4.500" fill="#18a34a" /><path d="M9.500 11.500l1.500 1.700 2.600-3" stroke="#fff" strokeWidth="1.200" fill="none" /></svg>
        <svg viewBox="0 0 16 16" className="size-4" fill="none" stroke="#fff" strokeWidth="1.200" aria-hidden="true"><path d="M5 3h10.400v8H4M9.500 11v3.500M6 14.500h7M.6 1.600h4v4h-4zM2.600 5.600V15" /></svg>
        <svg viewBox="0 0 16 16" className="size-4" aria-hidden="true"><path d="M2 1c5-2 11 3 13 11-2 2-5 2-7 1C4 11 1 6 2 1z" fill="#0c0c0c" /><path d="M2 1c-1 4 2 10 6 12 2 1 5 1 7-1M5 5l6 3" stroke="#dcdcdc" strokeWidth="1.400" fill="none" /><path d="M3 10l-2 5h7l-2-3z" fill="#c4c4c4" /></svg>
        <svg viewBox="0 0 18 16" className="h-4 w-[18px]" fill="none" stroke="#fff" strokeWidth="1.200" aria-hidden="true"><path d="M1 5.500h3l4-4v13l-4-4H1zM10 5.500c1.500 1.500 1.500 3.500 0 5M12.500 3.500c2.500 2.500 2.500 6.500 0 9M15 1.500c3.500 3.500 3.500 9.500 0 13" /></svg>
        <svg viewBox="0 0 16 16" className="size-4" fill="none" stroke="#fff" strokeWidth="1.200" aria-hidden="true"><path d="M1 2.500h14v11H1zM1 2.500l7 6.500 7-6.500M1 13.500L6 8M15 13.500L10 8" /></svg>
      </div>
      <span className="ml-2.5 text-[12px]">РУС</span>
      <time className="ml-3 flex w-11 flex-col items-center text-[12px] leading-[19px]"><span>14:53</span><span>01.03.22</span></time>
      <button aria-label="Уведомления: 2" className="relative ml-4 size-6">
        <svg viewBox="0 0 24 24" className="size-6" aria-hidden="true"><path d="M0 2h16v12H7l-4 4v-4H0z" fill="#fff" /><path d="M3 5h10M3 8h10M3 11h6" stroke="#2a3745" strokeWidth="1.200" /></svg>
        <span className="absolute top-2 left-2 flex size-4 items-center justify-center rounded-full border border-[#8c98a3] bg-[#3a4652] text-[11px] leading-none font-bold text-white">2</span>
      </button>
      <span className="mr-1 ml-2.5 h-10 w-px bg-[#66727e]" />
    </div>
  </footer>
);

export default function App() {
  return (
    <div className={`flex min-h-screen flex-col bg-white text-[11px] leading-[14px] ${FONT}`}>
      <TitleBar />
      <Ribbon />
      <DocumentTabs />
      <div className="mb-px flex flex-1 border-b-2 border-[#b0b0b0] bg-[#dedede] px-px">
        <ParamsPanel />
        <TableArea />
        <ColumnsPanel />
      </div>
      <StatusBar />
      <TaskBar />
    </div>
  );
}
